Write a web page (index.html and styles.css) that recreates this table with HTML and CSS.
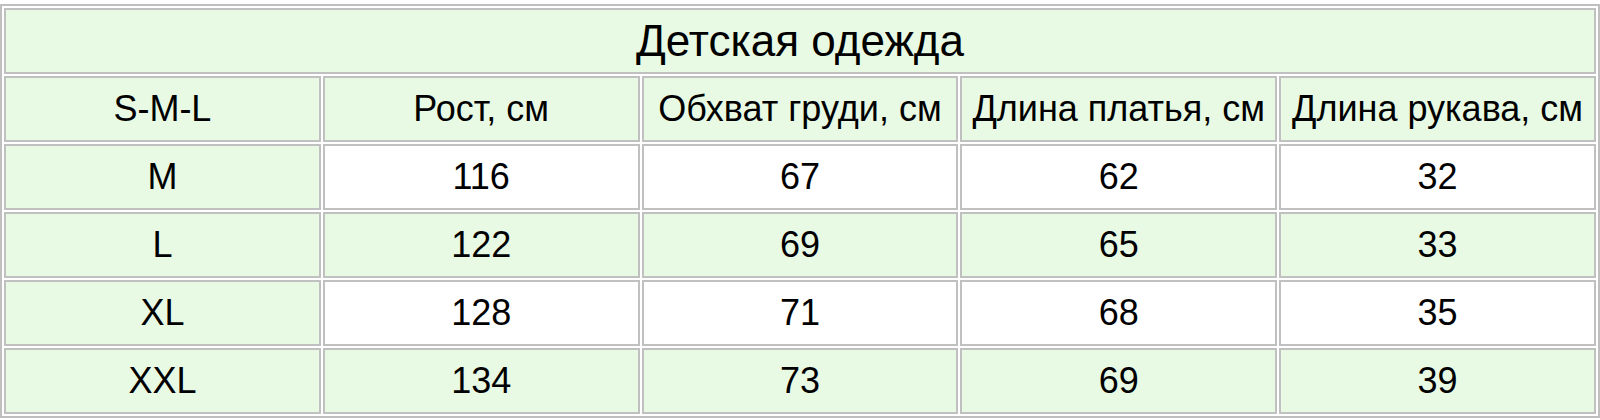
FILE: index.html
```html
<!DOCTYPE html>
<html lang="ru">
<head>
<meta charset="utf-8">
<title>Детская одежда</title>
<link rel="stylesheet" href="styles.css">
</head>
<body>
<table class="size-table">
  <tr>
    <td class="cell title green" colspan="5">Детская одежда</td>
  </tr>
  <tr>
    <td class="cell green">S-M-L</td>
    <td class="cell green">Рост, см</td>
    <td class="cell green">Обхват груди, см</td>
    <td class="cell green">Длина платья, см</td>
    <td class="cell green">Длина рукава, см</td>
  </tr>
  <tr>
    <td class="cell green">M</td>
    <td class="cell">116</td>
    <td class="cell">67</td>
    <td class="cell">62</td>
    <td class="cell">32</td>
  </tr>
  <tr>
    <td class="cell green">L</td>
    <td class="cell green">122</td>
    <td class="cell green">69</td>
    <td class="cell green">65</td>
    <td class="cell green">33</td>
  </tr>
  <tr>
    <td class="cell green">XL</td>
    <td class="cell">128</td>
    <td class="cell">71</td>
    <td class="cell">68</td>
    <td class="cell">35</td>
  </tr>
  <tr>
    <td class="cell green">XXL</td>
    <td class="cell green">134</td>
    <td class="cell green">73</td>
    <td class="cell green">69</td>
    <td class="cell green">39</td>
  </tr>
</table>
</body>
</html>
```

FILE: styles.css
```css
html, body {
  margin: 0;
  padding: 0;
  background: #ffffff;
}

body {
  padding-top: 4px;
  font-family: "Liberation Sans", Arial, sans-serif;
  color: #000000;
}

.size-table {
  width: 1600px;
  table-layout: fixed;
  border-collapse: separate;
  border-spacing: 2px;
  border: 2px solid #bfbfbf;
  background: #ffffff;
}

.cell {
  box-sizing: border-box;
  height: 66px;
  padding: 0;
  border: 2px solid #c0c0c0;
  text-align: center;
  vertical-align: middle;
  font-size: 36px;
  line-height: 1;
  background: #ffffff;
}

.cell.green {
  background: #e8fae4;
}

.cell.title {
  font-size: 44px;
}
```
